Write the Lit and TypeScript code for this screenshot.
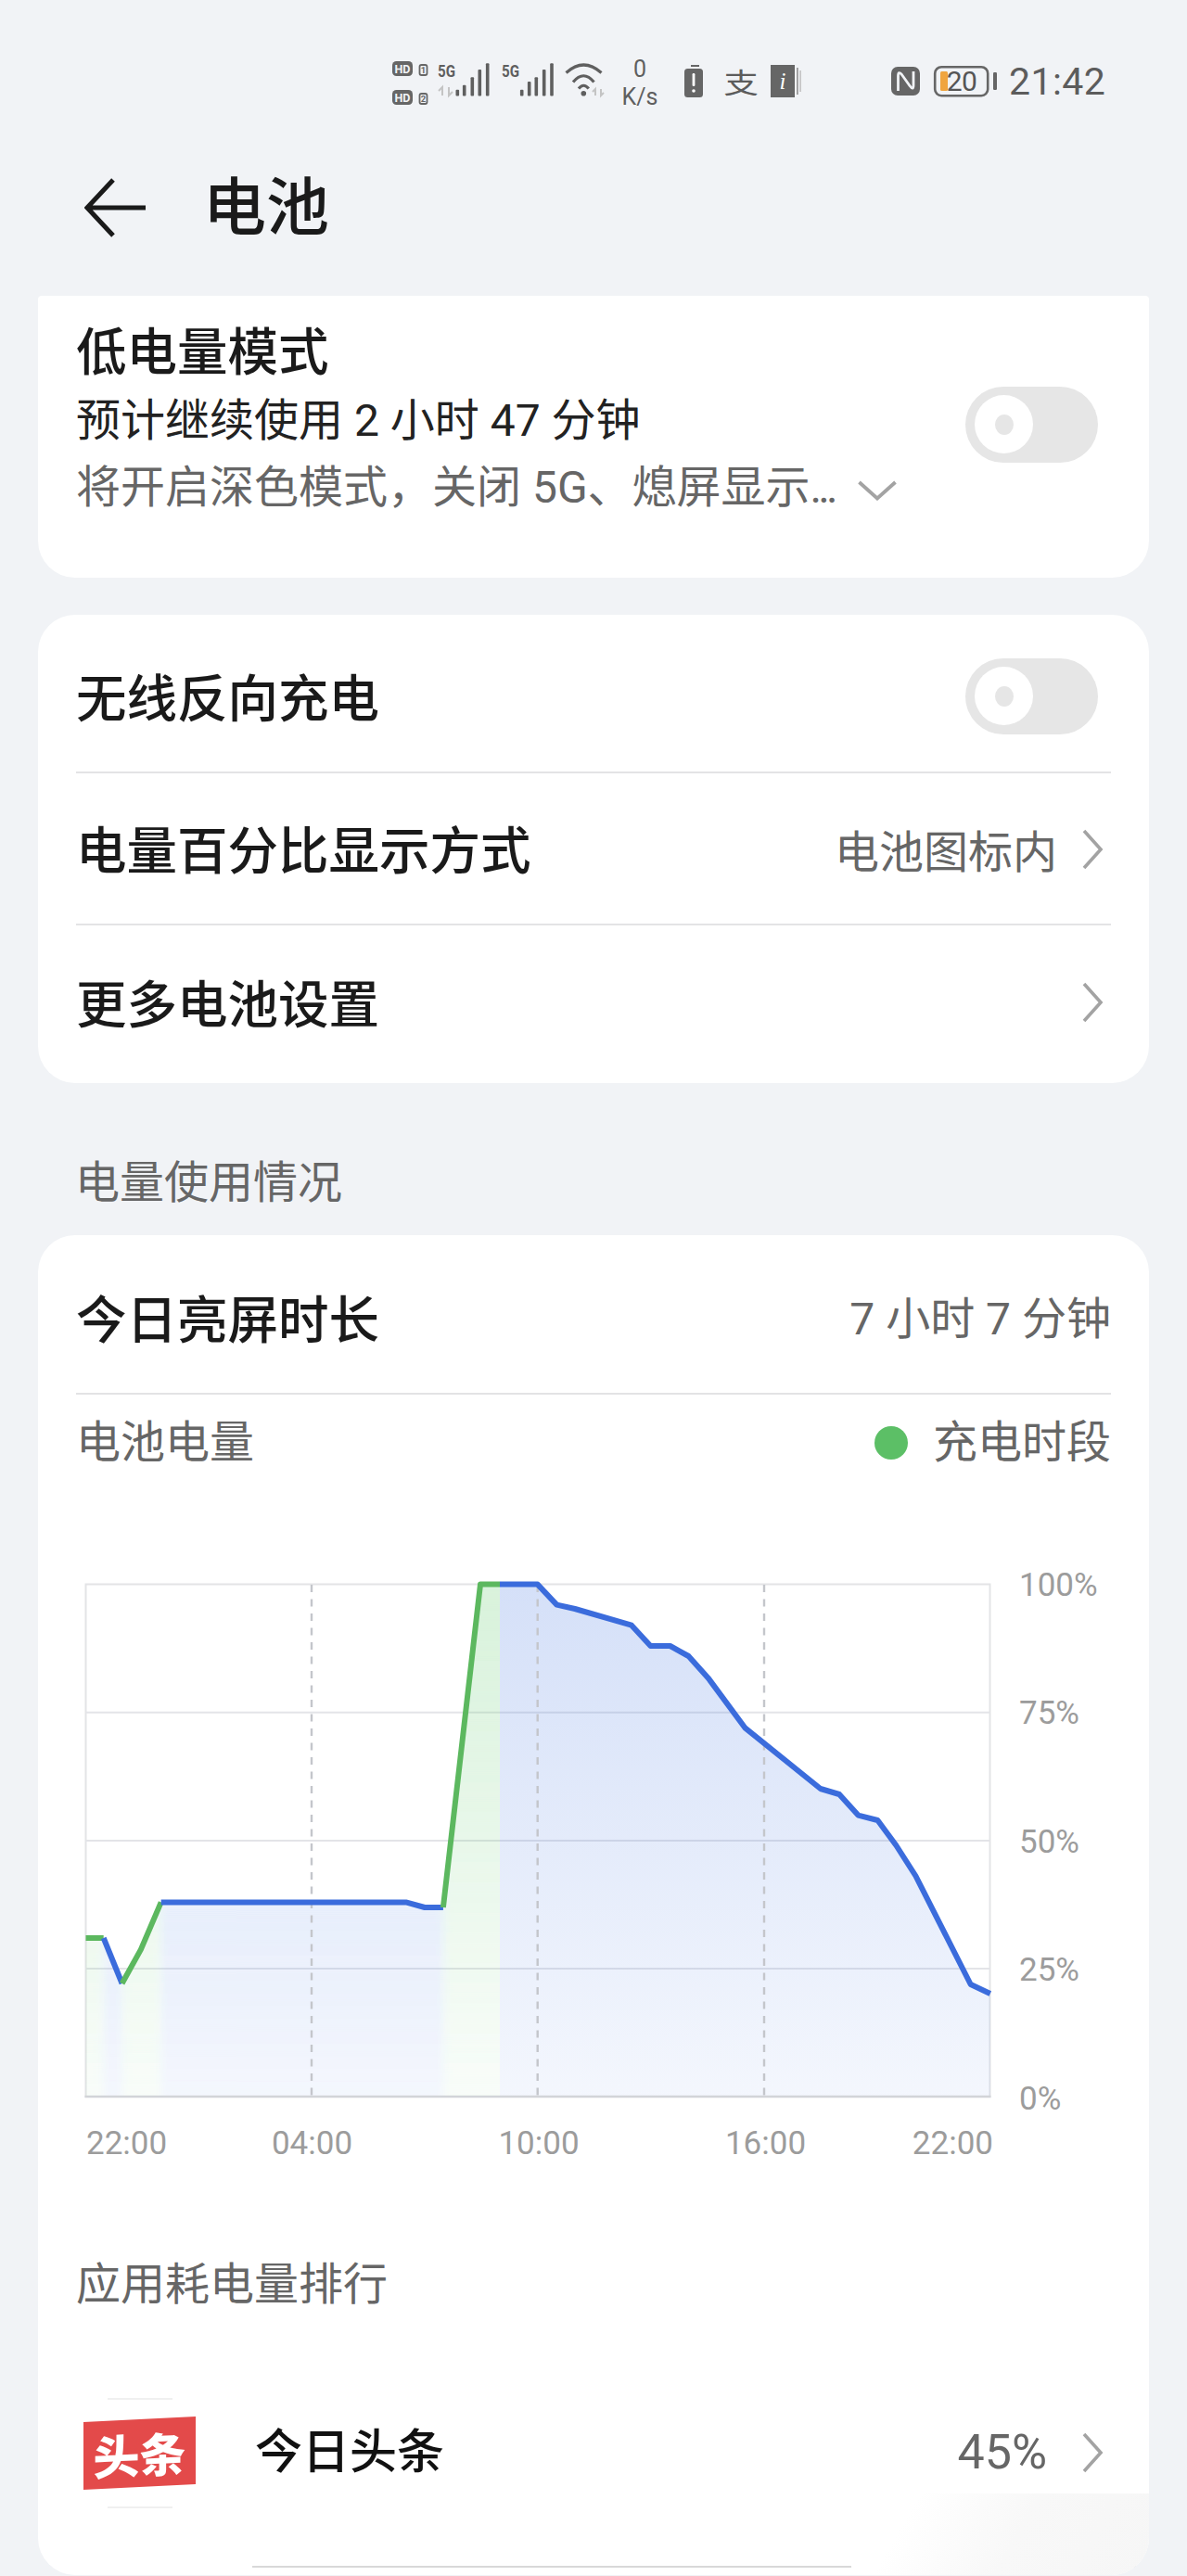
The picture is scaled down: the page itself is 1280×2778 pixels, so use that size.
import { LitElement, html, css, svg } from "lit";
import { customElement } from "lit/decorators.js";

const toggle = html`<div class="toggle"><div class="knob"><div class="dot"></div></div></div>`;
const chev = html`<svg class="chev" width="24" height="44" viewBox="0 0 24 44"><path d="M3 2 L21 22 L3 42" fill="none" stroke="#a3a3a3" stroke-width="3.6"/></svg>`;

const X = 92.5, R = 1067.5, B = 2261;
const segs: { c: string; p: number[][] }[] = [
  { c: "g", p: [[92.5, 2090], [111.7, 2090]] },
  { c: "b", p: [[111.7, 2090], [131.6, 2139]] },
  { c: "g", p: [[131.6, 2139], [151.9, 2102.4], [173.7, 2051.4]] },
  { c: "b", p: [[173.7, 2051.4], [437.7, 2051.4], [458, 2057], [477.9, 2057]] },
  { c: "g", p: [[477.9, 2057], [518, 1708.6], [539, 1708.6]] },
  { c: "b", p: [[539, 1708.6], [579.7, 1708.6], [600.4, 1730.6], [620, 1735], [681, 1752.7], [701.5, 1775], [722.6, 1775], [742.5, 1786], [763.5, 1809.4], [803.7, 1863.7], [884.8, 1929], [905, 1935], [925.4, 1957.6], [946.4, 1963], [966.3, 1990], [987.4, 2023], [1046.7, 2140], [1067.8, 2150]] },
];
const pts = (p: number[][]) => p.map((q) => q.join(",")).join(" ");
const area = (p: number[][]) => `${p[0][0]},${B} ${pts(p)} ${p[p.length - 1][0]},${B}`;
const softSegs = segs.slice(0, 5);
const softArea = area(softSegs.flatMap((s) => s.p));
const softBands: [string, number, number][] = [["fg", 60, 111.7], ["fb", 111.7, 131.6], ["fg", 131.6, 173.7], ["fb", 173.7, 477.9], ["fg", 477.9, 570]];
const gridY = [1846.7, 1985, 2123];
const dashX = [336, 579.7, 824];
const yLabels: [string, number][] = [["100%", 1709], ["75%", 1847], ["50%", 1986], ["25%", 2124], ["0%", 2263]];
const xLabels: [string, number, string][] = [["22:00", 93, "start"], ["04:00", 336.5, "middle"], ["10:00", 581, "middle"], ["16:00", 825.5, "middle"], ["22:00", 1071, "end"]];

const chart = html`<svg class="chart" width="1198" height="745" viewBox="41 1604 1198 745">
  <defs>
    <linearGradient id="fb" gradientUnits="userSpaceOnUse" x1="0" y1="1708" x2="0" y2="2261"><stop offset="0" stop-color="#3f72e0" stop-opacity=".22"/><stop offset="1" stop-color="#3f72e0" stop-opacity=".06"/></linearGradient>
    <linearGradient id="fg" gradientUnits="userSpaceOnUse" x1="0" y1="1708" x2="0" y2="2261"><stop offset="0" stop-color="#5cc868" stop-opacity=".24"/><stop offset="1" stop-color="#5cc868" stop-opacity=".04"/></linearGradient>
    <filter id="soft" filterUnits="userSpaceOnUse" x="40" y="1700" width="560" height="570"><feGaussianBlur stdDeviation="5 0"/></filter>
    <clipPath id="softClip"><polygon points=${softArea}/></clipPath>
  </defs>
  <rect x=${X} y="1708.5" width=${R - X} height=${B - 1708.5} fill="none" stroke="#e3e4e6" stroke-width="2"/>
  ${gridY.map((y) => svg`<line x1=${X} x2=${R} y1=${y} y2=${y} stroke="#e3e4e8" stroke-width="2"/>`)}
  <g clip-path="url(#softClip)"><g filter="url(#soft)">
    ${softBands.map(([f, a, b]) => svg`<rect x=${a} y="1708" width=${b - a} height=${B - 1708} fill=${`url(#${f})`}/>`)}
  </g></g>
  <polygon points=${area(segs[5].p)} fill="url(#fb)"/>
  ${dashX.map((x) => svg`<line x1=${x} x2=${x} y1="1709" y2=${B} stroke="#c4c6cb" stroke-width="2.4" stroke-dasharray="8 7.5"/>`)}
  <line x1=${X - 1} x2=${R + 1} y1=${B} y2=${B} stroke="#d2d4d8" stroke-width="2.6"/>
  ${segs.map((s) => svg`<polyline points=${pts(s.p)} fill="none" stroke=${s.c === "g" ? "#5cb85f" : "#3b6cdc"} stroke-width="6" stroke-linejoin="round"/>`)}
  ${yLabels.map(([t, y]) => svg`<text class="axis" x="1099" y=${y + 12}>${t}</text>`)}
  ${xLabels.map(([t, x, a]) => svg`<text class="axis" x=${x} y="2323" text-anchor=${a}>${t}</text>`)}
</svg>`;

const bars = (xs: number[], tops: number[]) => xs.map((x, i) => svg`<rect x=${x - 1.8} y=${tops[i]} width="3.6" height=${103.5 - tops[i]} rx="1" fill="#5f5f5f"/>`);
const hd = (y: number, n: string) => svg`
  <rect x="423" y=${y} width="22" height="16" rx="4.5" fill="#666"/>
  <text class="hd" x="425.5" y=${y + 12.6} textLength="17" lengthAdjust="spacingAndGlyphs">HD</text>
  <rect x="452.5" y=${y + 4} width="8" height="11" rx="2" fill="none" stroke="#666" stroke-width="1.8"/>
  <text class="tiny" x="456.5" y=${y + 12.6} text-anchor="middle">${n}</text>`;

const signals = html`<svg class="s1" width="232" height="60" viewBox="423 60 232 60">
  ${hd(66, "1")}${hd(97, "2")}
  <text class="fiveg" x="472" y="83" textLength="19" lengthAdjust="spacingAndGlyphs">5G</text>
  <text class="fiveg" x="541" y="83" textLength="19" lengthAdjust="spacingAndGlyphs">5G</text>
  ${bars([493.3, 500.7, 509.3, 517.3, 525.7], [96.7, 91.7, 83.3, 75, 68.3])}
  ${bars([562.7, 570.7, 578.3, 586.7, 595], [96.7, 88, 83.3, 75, 68.3])}
  <path d="M477 103 V94 L473 98 M484 94 V103 L488 99" fill="none" stroke="#c4c4c4" stroke-width="2"/>
  <path d="M642 103 V96 L639 99 M648 96 V103 L651 100" fill="none" stroke="#c4c4c4" stroke-width="2"/>
  <g fill="none" stroke="#5f5f5f" stroke-width="3.2">
    <path d="M610.5 78.5 Q629.3 61.5 648.5 78.5"/>
    <path d="M618 88.5 Q629.3 75 640.5 88.5"/>
    <path d="M624 95.5 Q629.3 89 634.8 95.5"/>
  </g>
  <circle cx="629.3" cy="100.8" r="2.8" fill="#5f5f5f"/>
</svg>`;

const apps = html`<svg class="s2" width="128" height="80" viewBox="738 45 128 80">
  <rect x="745" y="70" width="9" height="2" fill="#666"/>
  <rect x="738" y="74" width="20" height="31" rx="3.5" fill="#666"/>
  <rect x="746.6" y="79" width="2.8" height="14" rx="1.2" fill="#fff"/>
  <circle cx="748" cy="98" r="1.8" fill="#fff"/>
  <text class="zhi" transform="translate(799 100) scale(1.02 .8)" text-anchor="middle">支</text>
  <rect x="831" y="70" width="26" height="35" fill="#666"/>
  <rect x="859" y="73" width="1.8" height="29" fill="#999"/>
  <rect x="862.4" y="76" width="1.4" height="23" fill="#bbb"/>
  <text class="ii" x="844" y="96" text-anchor="middle">i</text>
</svg>`;

const nfcBatt = html`<svg class="s3" width="116" height="60" viewBox="961 60 116 60">
  <rect x="961" y="72" width="31" height="31" rx="7" fill="#666"/>
  <path d="M968.5 98 V82 Q968.5 76 972.5 80.5 L981 92.5 Q985 98 985 92 V77" fill="none" stroke="#f1f3f6" stroke-width="2.8"/>
  <rect x="1008.2" y="72.2" width="57" height="31" rx="7" fill="none" stroke="#666" stroke-width="2.6"/>
  <rect x="1014" y="77" width="8" height="21" rx="1.5" fill="#f0a53f"/>
  <text class="batt" x="1037" y="98" text-anchor="middle">20</text>
  <rect x="1071" y="78" width="4" height="19" rx="1.2" fill="#666"/>
</svg>`;

@customElement("app-root")
export class AppRoot extends LitElement {
  static styles = css`
    :host { display: block; width: 1280px; height: 2778px; overflow: hidden; background: #f1f3f6;
      font-family: Roboto, "Noto Sans CJK SC", sans-serif; color: #1a1a1a; }
    svg { display: block; flex: none; }
    .status { height: 60px; padding: 60px 0 0 423px; display: flex; align-items: flex-start; color: #5f5f5f; }
    .s1 { margin-right: 13px; }
    .speed { width: 44px; display: flex; flex-direction: column; align-items: center; font-size: 25px; line-height: 30px; }
    .s2 { margin: -15px 0 0 26px; }
    .s3 { margin-left: 95px; }
    .time { margin: -2px 0 0 11px; font-size: 41px; line-height: 60px; letter-spacing: .4px; color: #5c5c5c; }
    .nav { height: 199px; box-sizing: border-box; padding: 72px 0 0 91px; display: flex; align-items: flex-start; gap: 62px; }
    .nav h1 { margin: -11px 0 0; font-size: 68px; line-height: 88px; font-weight: 500; }
    .card { margin: 0 41px; background: #fff; border-radius: 40px; }
    .low { height: 304px; box-sizing: border-box; border-radius: 4px 4px 40px 40px; padding: 25px 55px 0 41px; margin-bottom: 40px; display: flex; justify-content: space-between; }
    .t { font-size: 54.5px; line-height: 72px; font-weight: 500; white-space: nowrap; }
    .sub { font-size: 48px; line-height: 72px; white-space: nowrap; color: #222; }
    .low .sub { position: relative; top: 2px; }
    .sub.g { color: #666; display: flex; align-items: center; }
    .dots { letter-spacing: -4px; margin-right: 25px; }
    .down { margin-top: 6px; }
    .toggle { width: 143px; height: 82px; border-radius: 41px; background: #e6e6e6; padding: 9px 0 0 10px; box-sizing: border-box; flex: none; }
    .knob { width: 63px; height: 63px; border-radius: 50%; background: #fff; display: flex; align-items: center; justify-content: center; }
    .dot { width: 20px; height: 22px; border-radius: 50%; background: #e6e6e6; }
    .low .toggle { margin-top: 73px; }
    .row { display: flex; align-items: center; justify-content: space-between; margin: 0 41px; box-sizing: border-box; }
    .row .right { display: flex; align-items: center; gap: 26px; font-size: 48px; color: #666; white-space: nowrap; margin-bottom: 6px; }
    .row .right .chev { margin-right: 8px; margin-top: 2px; }
    .sep { height: 2px; background: #e3e3e5; margin: 0 41px; }
    .r1 { height: 169px; padding: 12px 14px 0 0; }
    .r1 .toggle { margin-bottom: 5px; }
    .r2 { height: 162px; padding-top: 6px; }
    .r3 { height: 170px; padding-top: 1px; }
    .r3 .right { margin-bottom: 8px; }
    .settings { margin-bottom: 0; overflow: hidden; }
    .section { height: 164px; box-sizing: border-box; padding: 72px 0 0 81px; font-size: 48px; line-height: 72px; color: #666; }
    .usage { position: relative; height: 1445px; overflow: hidden; }
    .r4 { height: 170px; padding-top: 13px; }
    .r4 .right { color: #666; margin-bottom: 11px; }
    .r5 { height: 100px; padding-top: 3px; color: #666; font-size: 48px; line-height: 60px; }
    .legend { display: flex; align-items: center; gap: 27px; }
    .ldot { width: 36px; height: 36px; border-radius: 50%; background: #5cbf66; }
    .axis { font-size: 35px; fill: #9c9c9c; font-family: Roboto, sans-serif; }
    .hd { font: 700 13.5px Roboto, sans-serif; fill: #f1f3f6; }
    .tiny { font: 700 9.5px Roboto, sans-serif; fill: #666; }
    .fiveg { font: 700 18px Roboto, sans-serif; fill: #5f5f5f; }
    .zhi { font: 400 37px "Noto Sans CJK SC", sans-serif; fill: #5c5c5c; }
    .ii { font: italic 400 25px "Liberation Serif", serif; fill: #fff; }
    .batt { font: 400 30px Roboto, sans-serif; fill: #555; letter-spacing: -.5px; }
    .rank { height: 226px; box-sizing: border-box; padding: 79px 0 0 41px; font-size: 48px; line-height: 72px; color: #666; }
    .app { height: 192px; box-sizing: border-box; padding: 0 49px 52px 49px; display: flex; align-items: center; }
    .ico-col { width: 121px; display: flex; flex-direction: column; align-items: center; gap: 21px; flex: none; }
    .ico-col i { display: block; width: 70px; height: 2px; background: #f0f0f0; }
    .ico { width: 121px; height: 73px; background: #e34a4a; transform: skewY(-2.8deg); color: #fff; font-size: 50px; line-height: 72px; font-weight: 900; text-align: center; font-family: "Noto Sans CJK SC", sans-serif; white-space: nowrap; }
    .app-name { margin-left: 64px; flex: 1; font-size: 51px; line-height: 72px; font-weight: 500; color: #111; }
    .pct { font-size: 52px; line-height: 60px; color: #666; margin-right: 37px; }
    .line { height: 2px; background: #d9d9d9; margin-left: 231px; }
    .mark { position: absolute; right: 0; bottom: 0; width: 321px; height: 88px; background: linear-gradient(120deg, #ffffff 20%, #f8f8f8 55%, #f6f6f6 100%); }
  `;

  render() {
    return html`
      <div class="status">
        ${signals}
        <div class="speed"><span>0</span><span>K/s</span></div>
        ${apps}${nfcBatt}
        <div class="time">21:42</div>
      </div>
      <div class="nav">
        <svg width="66" height="64" viewBox="0 0 66 64"><path d="M31 2 L3 32 L31 62 M3 32 H66" fill="none" stroke="#1a1a1a" stroke-width="5"/></svg>
        <h1>电池</h1>
      </div>

      <div class="card low">
        <div>
          <div class="t">低电量模式</div>
          <div class="sub">预计继续使用 2 小时 47 分钟</div>
          <div class="sub g"><span>将开启深色模式，关闭 5G、熄屏显示</span><span class="dots">...</span>
            <svg class="down" width="42" height="22" viewBox="0 0 42 22"><path d="M1.5 2 L21 19.5 L40.5 2" fill="none" stroke="#a3a3a3" stroke-width="3.8"/></svg>
          </div>
        </div>
        ${toggle}
      </div>

      <div class="card settings">
        <div class="row r1"><div class="t">无线反向充电</div>${toggle}</div>
        <div class="sep"></div>
        <div class="row r2"><div class="t">电量百分比显示方式</div><div class="right">电池图标内${chev}</div></div>
        <div class="sep"></div>
        <div class="row r3"><div class="t">更多电池设置</div><div class="right">${chev}</div></div>
      </div>

      <div class="section">电量使用情况</div>

      <div class="card usage">
        <div class="row r4"><div class="t">今日亮屏时长</div><div class="right">7 小时 7 分钟</div></div>
        <div class="sep"></div>
        <div class="row r5"><div>电池电量</div><div class="legend"><div class="ldot"></div><div>充电时段</div></div></div>
        ${chart}
        <div class="rank">应用耗电量排行</div>
        <div class="app">
          <div class="ico-col"><i></i><div class="ico">头条</div><i></i></div>
          <div class="app-name">今日头条</div>
          <div class="pct">45%</div>
          ${chev}
        </div>
        <div class="line"></div>
        <div class="mark"></div>
      </div>
    `;
  }
}
